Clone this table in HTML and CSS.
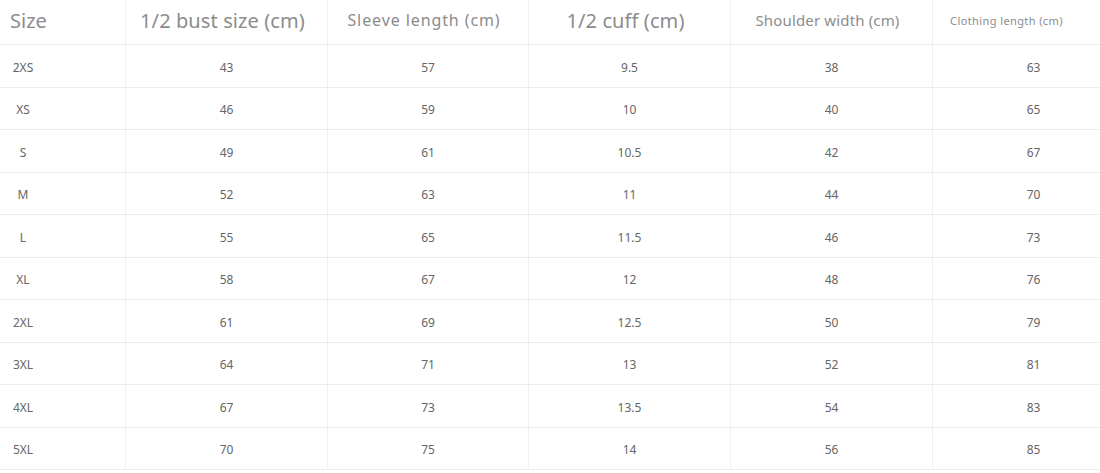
FILE: index.html
```html
<!DOCTYPE html>
<html>
<head>
<meta charset="utf-8">
<link rel="stylesheet" href="styles.css">
</head>
<body>
<div class="wrap">
  <div class="chart">
    <div class="cell head first"><span>Size</span></div>
    <div class="cell head h-lg">1/2 bust size (cm)</div>
    <div class="cell head h-md">Sleeve length (cm)</div>
    <div class="cell head h-lg">1/2 cuff (cm)</div>
    <div class="cell head h-md2">Shoulder width (cm)</div>
    <div class="cell head h-sm last">Clothing length (cm)</div>

    <div class="cell first"><span>2XS</span></div><div class="cell">43</div><div class="cell">57</div><div class="cell">9.5</div><div class="cell">38</div><div class="cell">63</div>
    <div class="cell first"><span>XS</span></div><div class="cell">46</div><div class="cell">59</div><div class="cell">10</div><div class="cell">40</div><div class="cell">65</div>
    <div class="cell first"><span>S</span></div><div class="cell">49</div><div class="cell">61</div><div class="cell">10.5</div><div class="cell">42</div><div class="cell">67</div>
    <div class="cell first"><span>M</span></div><div class="cell">52</div><div class="cell">63</div><div class="cell">11</div><div class="cell">44</div><div class="cell">70</div>
    <div class="cell first"><span>L</span></div><div class="cell">55</div><div class="cell">65</div><div class="cell">11.5</div><div class="cell">46</div><div class="cell">73</div>
    <div class="cell first"><span>XL</span></div><div class="cell">58</div><div class="cell">67</div><div class="cell">12</div><div class="cell">48</div><div class="cell">76</div>
    <div class="cell first"><span>2XL</span></div><div class="cell">61</div><div class="cell">69</div><div class="cell">12.5</div><div class="cell">50</div><div class="cell">79</div>
    <div class="cell first"><span>3XL</span></div><div class="cell">64</div><div class="cell">71</div><div class="cell">13</div><div class="cell">52</div><div class="cell">81</div>
    <div class="cell first"><span>4XL</span></div><div class="cell">67</div><div class="cell">73</div><div class="cell">13.5</div><div class="cell">54</div><div class="cell">83</div>
    <div class="cell first"><span>5XL</span></div><div class="cell">70</div><div class="cell">75</div><div class="cell">14</div><div class="cell">56</div><div class="cell">85</div>
  </div>
</div>
</body>
</html>
```
FILE: styles.css
```css
html, body {
  margin: 0;
  padding: 0;
  background: #ffffff;
}
.wrap {
  width: 1100px;
  height: 473px;
  overflow: hidden;
}
.chart {
  display: grid;
  grid-template-columns: 126px 202px 201px 202px 202px 202px;
  grid-template-rows: 45px repeat(10, 42.5px);
  width: 1135px;
  font-family: "Noto Sans", "Open Sans", sans-serif;
}
.cell {
  box-sizing: border-box;
  display: flex;
  align-items: center;
  justify-content: center;
  border-right: 1px solid #f0f0f0;
  border-bottom: 1px solid #ececec;
  color: #666;
  font-size: 12px;
  padding-top: 3px;
}
.head {
  color: #8c8c8c;
  padding-top: 0;
  padding-bottom: 4px;
  padding-right: 8px;
}
.h-lg { font-size: 20px; letter-spacing: 0.1px; }
.h-md { font-size: 16px; letter-spacing: 0.9px; }
.h-md2 { font-size: 15px; letter-spacing: 0.15px; }
.h-sm { font-size: 11px; letter-spacing: 0.4px; }
.head.last { padding-right: 54px; }
.first {
  justify-content: flex-start;
}
.first span {
  display: inline-block;
  width: 46px;
  text-align: center;
}
.head.first {
  padding-right: 0;
}
.head.first span {
  width: auto;
  padding-left: 10px;
  font-size: 20px;
}
```
